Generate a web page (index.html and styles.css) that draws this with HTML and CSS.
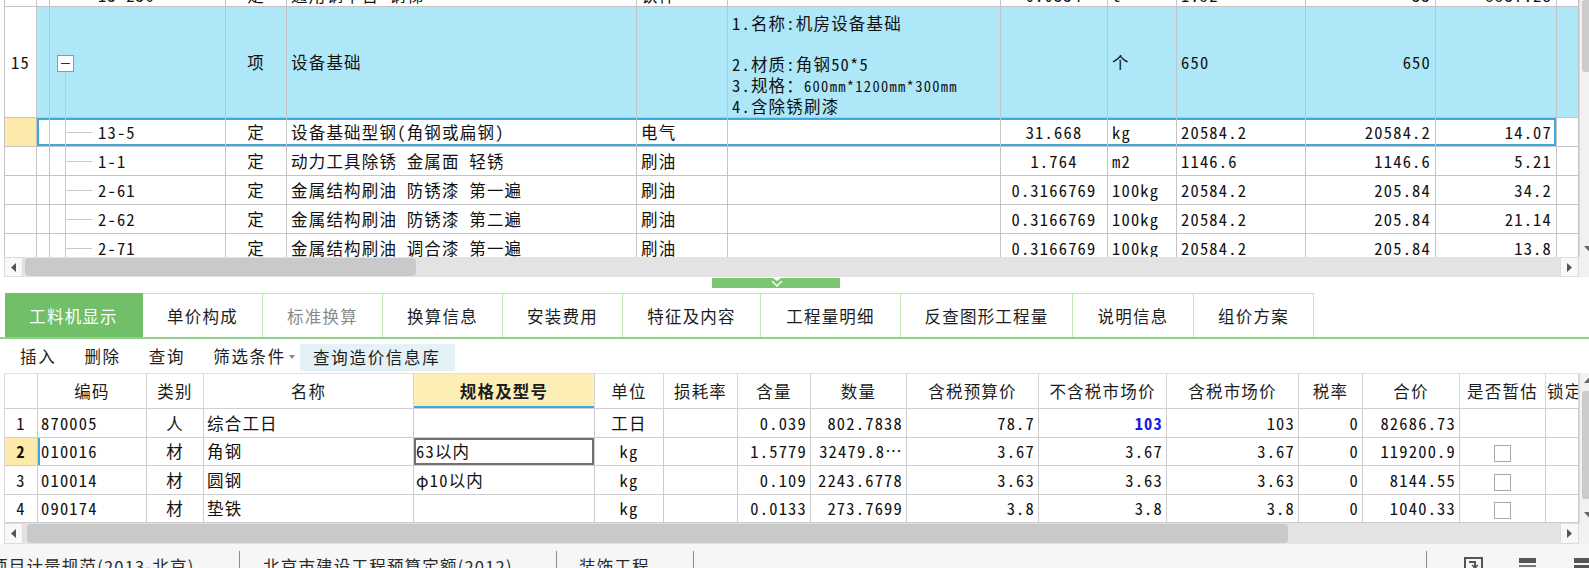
FILE: index.html
```html
<!DOCTYPE html>
<html lang="zh-CN">
<head>
<meta charset="utf-8">
<title>工料机显示</title>
<link rel="stylesheet" href="styles.css">
</head>
<body>
<div class="app">
  <section class="upper">
    <div class="upper-main">
      <div class="viewport">
        <table class="tg">
          <colgroup>
            <col class="tw-no"><col class="tw-flag"><col class="tw-code"><col class="tw-type"><col class="tw-name"><col class="tw-major"><col class="tw-feat"><col class="tw-qty"><col class="tw-unit"><col class="tw-expr"><col class="tw-amount"><col class="tw-price"><col class="tw-pad">
          </colgroup>
          <tbody>
            <tr class="r-partial">
              <td></td><td></td><td class="code-pad">13-236</td><td class="ctr">定</td><td>通用钢平台 钢梯</td><td>铁件</td><td></td><td class="ctr">0.0334</td><td>t</td><td>1.52</td><td class="num">33</td><td class="num">5537.28</td><td></td>
            </tr>
            <tr class="r-group">
              <td class="ctr">15</td>
              <td class="hl"></td>
              <td class="hl c-tree"><div class="node"><span class="minus"></span><span class="stem"></span></div></td>
              <td class="hl ctr">项</td>
              <td class="hl">设备基础</td>
              <td class="hl"></td>
              <td class="hl feat">
                <div>1.名称:机房设备基础</div>
                <div class="gap-line"></div>
                <div>2.材质:角钢50*5</div>
                <div>3.规格：<span class="small">600mm*1200mm*300mm</span></div>
                <div>4.含除锈刷漆</div>
              </td>
              <td class="hl"></td>
              <td class="hl">个</td>
              <td class="hl">650</td>
              <td class="hl num">650</td>
              <td class="hl"></td>
              <td class="hl"></td>
            </tr>
            <tr class="sel">
              <td class="mark"></td><td class="s s-first"></td>
              <td class="s c-tree"><div class="leaf"><i class="conn"></i>13-5</div></td>
              <td class="s ctr">定</td><td class="s">设备基础型钢(角钢或扁钢)</td><td class="s">电气</td><td class="s"></td>
              <td class="s ctr">31.668</td><td class="s">kg</td><td class="s">20584.2</td><td class="s num">20584.2</td><td class="s s-last num">14.07</td><td></td>
            </tr>
            <tr>
              <td></td><td></td>
              <td class="c-tree"><div class="leaf"><i class="conn"></i>1-1</div></td>
              <td class="ctr">定</td><td>动力工具除锈 金属面 轻锈</td><td>刷油</td><td></td>
              <td class="ctr">1.764</td><td>m2</td><td>1146.6</td><td class="num">1146.6</td><td class="num">5.21</td><td></td>
            </tr>
            <tr>
              <td></td><td></td>
              <td class="c-tree"><div class="leaf"><i class="conn"></i>2-61</div></td>
              <td class="ctr">定</td><td>金属结构刷油 防锈漆 第一遍</td><td>刷油</td><td></td>
              <td class="ctr">0.3166769</td><td>100kg</td><td>20584.2</td><td class="num">205.84</td><td class="num">34.2</td><td></td>
            </tr>
            <tr>
              <td></td><td></td>
              <td class="c-tree"><div class="leaf"><i class="conn"></i>2-62</div></td>
              <td class="ctr">定</td><td>金属结构刷油 防锈漆 第二遍</td><td>刷油</td><td></td>
              <td class="ctr">0.3166769</td><td>100kg</td><td>20584.2</td><td class="num">205.84</td><td class="num">21.14</td><td></td>
            </tr>
            <tr>
              <td></td><td></td>
              <td class="c-tree"><div class="leaf"><i class="conn"></i>2-71</div></td>
              <td class="ctr">定</td><td>金属结构刷油 调合漆 第一遍</td><td>刷油</td><td></td>
              <td class="ctr">0.3166769</td><td>100kg</td><td>20584.2</td><td class="num">205.84</td><td class="num">13.8</td><td></td>
            </tr>
          </tbody>
        </table>
      </div>
      <div class="hscroll">
        <span class="hs-btn"><svg width="6" height="9" viewBox="0 0 6 9"><polygon points="5,0 5,9 0,4.5" fill="#555"/></svg></span>
        <span class="hs-thumb top-thumb"></span>
        <span class="hs-fill"></span>
        <span class="hs-btn"><svg width="6" height="9" viewBox="0 0 6 9"><polygon points="0,0 0,9 5,4.5" fill="#555"/></svg></span>
      </div>
    </div>
    <div class="vcol">
      <div class="vscroll top-v">
        <span class="vs-thumb top-vthumb"></span>
        <span class="vs-fill"></span>
        <span class="vs-btn"><svg width="9" height="6" viewBox="0 0 9 6"><polygon points="0,0 9,0 4.5,5" fill="#666"/></svg></span>
      </div>
      <div class="corner"></div>
    </div>
  </section>

  <div class="splitter">
    <div class="handle">
      <svg width="14" height="9" viewBox="0 0 14 9"><polygon points="3,0 11,0 7,3" fill="#fff"/><polyline points="2,3 7,8 12,3" fill="none" stroke="#fff" stroke-width="1.4"/></svg>
    </div>
  </div>

  <nav class="tabs">
    <span class="tab active w138">工料机显示</span>
    <span class="tab w120">单价构成</span>
    <span class="tab w120 disabled">标准换算</span>
    <span class="tab w120">换算信息</span>
    <span class="tab w120">安装费用</span>
    <span class="tab w138">特征及内容</span>
    <span class="tab w140">工程量明细</span>
    <span class="tab w172">反查图形工程量</span>
    <span class="tab w121">说明信息</span>
    <span class="tab w120">组价方案</span>
  </nav>

  <div class="toolbar">
    <span class="tool">插入</span>
    <span class="tool">删除</span>
    <span class="tool">查询</span>
    <span class="tool drop">筛选条件<svg class="caret" width="6" height="4" viewBox="0 0 6 4"><polygon points="0,0 6,0 3,4" fill="#888"/></svg></span>
    <span class="tool boxed">查询造价信息库</span>
  </div>

  <section class="lower">
    <div class="lower-main">
      <table class="bgt">
        <colgroup>
          <col class="bw-no"><col class="bw-code"><col class="bw-type"><col class="bw-name"><col class="bw-spec"><col class="bw-unit"><col class="bw-loss"><col class="bw-cont"><col class="bw-qty"><col class="bw-p1"><col class="bw-p2"><col class="bw-p3"><col class="bw-rate"><col class="bw-total"><col class="bw-est"><col class="bw-lock">
        </colgroup>
        <thead>
          <tr>
            <th></th><th>编码</th><th>类别</th><th>名称</th><th class="active-h">规格及型号</th><th>单位</th><th>损耗率</th><th>含量</th><th>数量</th><th>含税预算价</th><th>不含税市场价</th><th>含税市场价</th><th>税率</th><th>合价</th><th>是否暂估</th><th class="cut">锁定</th>
          </tr>
        </thead>
        <tbody>
          <tr>
            <td class="ctr">1</td><td>870005</td><td class="ctr">人</td><td>综合工日</td><td class="spec"></td><td class="ctr">工日</td><td></td><td class="num">0.039</td><td class="num">802.7838</td><td class="num">78.7</td><td class="num blue">103</td><td class="num">103</td><td class="num">0</td><td class="num">82686.73</td><td></td><td></td>
          </tr>
          <tr class="cur">
            <td class="ctr mark bold">2</td><td class="cur-code">010016</td><td class="ctr">材</td><td>角钢</td><td class="spec edit">63以内</td><td class="ctr">kg</td><td></td><td class="num">1.5779</td><td class="num">32479.8…</td><td class="num">3.67</td><td class="num">3.67</td><td class="num">3.67</td><td class="num">0</td><td class="num">119200.9</td><td class="ctr"><span class="chk"></span></td><td></td>
          </tr>
          <tr>
            <td class="ctr">3</td><td>010014</td><td class="ctr">材</td><td>圆钢</td><td class="spec">φ10以内</td><td class="ctr">kg</td><td></td><td class="num">0.109</td><td class="num">2243.6778</td><td class="num">3.63</td><td class="num">3.63</td><td class="num">3.63</td><td class="num">0</td><td class="num">8144.55</td><td class="ctr"><span class="chk"></span></td><td></td>
          </tr>
          <tr>
            <td class="ctr">4</td><td>090174</td><td class="ctr">材</td><td>垫铁</td><td class="spec"></td><td class="ctr">kg</td><td></td><td class="num">0.0133</td><td class="num">273.7699</td><td class="num">3.8</td><td class="num">3.8</td><td class="num">3.8</td><td class="num">0</td><td class="num">1040.33</td><td class="ctr"><span class="chk"></span></td><td></td>
          </tr>
        </tbody>
      </table>
      <div class="hscroll low-h">
        <span class="hs-btn"><svg width="6" height="9" viewBox="0 0 6 9"><polygon points="5,0 5,9 0,4.5" fill="#555"/></svg></span>
        <span class="hs-thumb low-thumb"></span>
        <span class="hs-fill"></span>
        <span class="hs-btn"><svg width="6" height="9" viewBox="0 0 6 9"><polygon points="0,0 0,9 5,4.5" fill="#555"/></svg></span>
      </div>
    </div>
    <div class="vcol">
      <div class="vscroll low-v">
        <span class="vs-btn"><svg width="9" height="6" viewBox="0 0 9 6"><polygon points="0,5 9,5 4.5,0" fill="#666"/></svg></span>
        <span class="vs-thumb low-vthumb"></span>
        <span class="vs-fill"></span>
        <span class="vs-btn"><svg width="9" height="6" viewBox="0 0 9 6"><polygon points="0,0 9,0 4.5,5" fill="#666"/></svg></span>
      </div>
      <div class="corner low-corner"></div>
    </div>
  </section>

  <footer class="status">
    <span class="st-item st-1">项目计量规范(2013-北京)</span>
    <span class="st-sep"></span>
    <span class="st-item st-2">北京市建设工程预算定额(2012)</span>
    <span class="st-sep"></span>
    <span class="st-item st-3">装饰工程</span>
    <span class="st-sep"></span>
    <span class="st-fill"></span>
    <span class="st-sep"></span>
    <span class="st-icons">
      <svg class="ico ico-1" width="20" height="20" viewBox="0 0 20 20"><rect x="1" y="2" width="17" height="17" fill="none" stroke="#555" stroke-width="2"/><path d="M5 6h6v5" fill="none" stroke="#555" stroke-width="2"/><path d="M8 9l3 3 3-3" fill="none" stroke="#555" stroke-width="1.5"/></svg>
      <svg class="ico ico-2" width="20" height="20" viewBox="0 0 20 20"><rect x="1" y="2" width="17" height="5" fill="#555"/><rect x="1" y="9" width="17" height="2" fill="#777"/><rect x="1" y="13" width="17" height="5" fill="none" stroke="#555" stroke-width="1.5"/></svg>
      <svg class="ico ico-3" width="20" height="20" viewBox="0 0 20 20"><rect x="1" y="2" width="17" height="5" fill="#555"/><rect x="1" y="9" width="17" height="5" fill="#555"/><rect x="1" y="16" width="17" height="2" fill="#777"/></svg>
    </span>
  </footer>
</div>
</body>
</html>
```

FILE: styles.css
```css
* { box-sizing: border-box; }
html, body { margin: 0; padding: 0; }
body {
  width: 1589px;
  height: 568px;
  overflow: hidden;
  background: #fff;
  color: #151515;
  font-family: "Noto Sans CJK SC", "Noto Sans", sans-serif;
}
.app {
  --mono: "Noto Sans Mono CJK SC", "Liberation Mono", "Noto Sans CJK SC", monospace;
  --ui: "Noto Sans CJK SC", "Noto Sans", sans-serif;
  --line: #c4c4c4;
  display: flex;
  flex-direction: column;
  width: 1600px;
  height: 568px;
}

/* ---------- upper grid ---------- */
.upper { display: flex; height: 277px; flex: none; }
.upper-main { width: 1579px; padding-left: 4px; display: flex; flex-direction: column; flex: none; }
.viewport { height: 257px; overflow: hidden; flex: none; }

.tg, .bgt {
  table-layout: fixed;
  border-collapse: separate;
  border-spacing: 0;
  width: 1575px;
  font-family: var(--mono);
  font-size: 16.5px;
  letter-spacing: 1.2px;
  color: #111;
}
.tg { margin-top: -17px; }
.tg td {
  border-right: 1px solid var(--line);
  border-bottom: 1px solid var(--line);
  padding: 0 3px 0 4px;
  white-space: nowrap;
  overflow: hidden;
  line-height: 20px;
}
.tg td:first-child { border-left: 1px solid var(--line); }
.tg tr { height: 29px; }
.tg tr.r-partial { height: 24px; }
.tg tr.r-group { height: 111px; }

.tw-no { width: 33px; } .tw-flag { width: 13px; } .tw-code { width: 176px; }
.tw-type { width: 61px; } .tw-name { width: 350px; } .tw-major { width: 91px; }
.tw-feat { width: 273px; } .tw-qty { width: 107px; } .tw-unit { width: 69px; }
.tw-expr { width: 129px; } .tw-amount { width: 130px; } .tw-price { width: 121px; }
.tw-pad { width: 22px; }

.ctr { text-align: center; }
.num { text-align: right; }
.tg td.num { padding-right: 4px; }
.tg td.ctr { padding: 0; }
.code-pad { padding-left: 48px !important; }

.hl { background: #aee7f8; }
.tg td.feat { padding-top: 6px; line-height: 20.5px; }
.gap-line { height: 20.5px; }
.small { font-size: 14.5px; letter-spacing: 1.3px; }

.tg td.c-tree { padding: 0; vertical-align: top; }
.node {
  height: 110px;
  display: flex;
  flex-direction: column;
  padding: 48px 0 0 7px;
}
.minus {
  width: 17px;
  height: 17px;
  border: 1px solid #979797;
  background: #fff;
  display: flex;
  align-items: center;
  justify-content: center;
  flex: none;
}
.minus::before { content: ""; width: 9px; height: 1px; background: #333; }
.stem { flex: 1; margin-left: 8px; border-left: 1px solid #c9c9c9; }
.leaf {
  height: 28px;
  margin-left: 15px;
  border-left: 1px solid #c9c9c9;
  display: flex;
  align-items: center;
}
.conn { width: 26px; height: 0; border-top: 1px solid #c9c9c9; margin-right: 6px; flex: none; }

.tg td.mark, .bgt td.mark { background: #fde9a9; }
.sel td.s { box-shadow: inset 0 2px 0 #3ea8da, inset 0 -2px 0 #3ea8da; }
.sel td.s-first { box-shadow: inset 2px 0 0 #3ea8da, inset 0 2px 0 #3ea8da, inset 0 -2px 0 #3ea8da; }
.sel td.s-last { box-shadow: inset -2px 0 0 #3ea8da, inset 0 2px 0 #3ea8da, inset 0 -2px 0 #3ea8da; }

/* ---------- scrollbars ---------- */
.hscroll { height: 20px; display: flex; background: #e3e3e3; flex: none; }
.hs-btn {
  width: 19px;
  flex: none;
  background: #f8f8f8;
  border: 1px solid #dcdcdc;
  display: flex;
  align-items: center;
  justify-content: center;
}
.hs-thumb { flex: none; margin: 1px 0 1px 2px; background: #c9c9c9; border-radius: 4px; }
.top-thumb { width: 391px; }
.low-thumb { width: 1261px; margin-left: 4px; }
.hs-fill { flex: 1; }
.low-h { height: 21px; }

.vcol { width: 17px; flex: none; display: flex; flex-direction: column; }
.vscroll { display: flex; flex-direction: column; background: #f1f1f1; border-left: 1px solid #dadada; }
.top-v { height: 257px; }
.low-v { height: 150px; }
.vs-btn { height: 16px; flex: none; display: flex; align-items: center; justify-content: center; }
.vs-thumb { flex: none; margin: 0 2px; background: #cbcbcb; border-radius: 3px; }
.top-vthumb { height: 72px; }
.low-vthumb { height: 108px; margin-top: 2px; }
.vs-fill { flex: 1; }
.corner { height: 20px; background: #f1f1f1; }
.low-corner { height: 21px; }

/* ---------- splitter ---------- */
.splitter { height: 16px; flex: none; padding: 1px 0 0 712px; }
.handle {
  width: 128px;
  height: 10px;
  background: #7bc471;
  display: flex;
  justify-content: center;
  padding-left: 2px;
}

/* ---------- tabs ---------- */
.tabs {
  height: 46px;
  flex: none;
  display: flex;
  padding-left: 5px;
  border-bottom: 2px solid #8fd385;
  font-family: var(--ui);
  font-size: 16.5px;
  letter-spacing: 1.2px;
  color: #1d1d1d;
}
.tab {
  display: flex;
  align-items: center;
  justify-content: center;
  border-top: 1px solid #bfe9b3;
  border-right: 1px solid #bfe9b3;
  flex: none;
}
.tab.active { background: #71c069; color: #fff; border-color: #71c069; }
.tab.disabled { color: #8a8a8a; }
.w120 { width: 120px; } .w121 { width: 121px; } .w138 { width: 138px; }
.w140 { width: 140px; } .w172 { width: 172px; }

/* ---------- toolbar ---------- */
.toolbar {
  height: 34px;
  flex: none;
  display: flex;
  align-items: center;
  padding-left: 20px;
  font-family: var(--ui);
  font-size: 16.5px;
  letter-spacing: 1.7px;
  color: #1d1d1d;
}
.tool { margin-right: 28px; flex: none; }
.tool.drop { margin-right: 5px; display: flex; align-items: center; }
.caret { margin-left: 3px; margin-top: 2px; flex: none; }
.tool.boxed {
  background: #e4f2f7;
  height: 27px;
  margin-top: 2px;
  width: 155px;
  padding-left: 13px;
  display: flex;
  align-items: center;
}

/* ---------- lower grid ---------- */
.lower { display: flex; height: 171px; flex: none; }
.lower-main { width: 1579px; padding-left: 4px; display: flex; flex-direction: column; flex: none; }
.bgt { flex: none; }
.bgt th {
  height: 36px;
  font-family: var(--ui);
  font-weight: 400;
  font-size: 16.5px;
  color: #1d1d1d;
  border-top: 1px solid #e1e1e1;
  border-right: 1px solid #d5d5d5;
  border-bottom: 1px solid #cfcfcf;
  padding: 0;
  white-space: nowrap;
  overflow: hidden;
  text-align: center;
}
.bgt th:first-child, .bgt td:first-child { border-left: 1px solid #d5d5d5; }
.bgt th.active-h { background: #fdeeb6; font-weight: 700; box-shadow: inset 0 -2px 0 #3ea8da; }
.bgt th.cut { text-align: left; padding-left: 1px; }
.bgt tbody tr { height: 28.5px; }
.bgt td {
  border-right: 1px solid #cdcdcd;
  border-bottom: 1px solid #cdcdcd;
  padding: 0 3px;
  white-space: nowrap;
  overflow: hidden;
}
.bgt td.num { padding-right: 3px; }
.bgt td.ctr { padding: 0; }
.bgt td.spec { padding-left: 2px; }
.bgt td.edit { box-shadow: inset 0 0 0 2px #717171; }
.bgt td.cur-code { box-shadow: inset 2px 0 0 #3ea8da; }
.bold { font-weight: 700; }
.blue { color: #1b1be8; font-weight: 700; }
.chk {
  display: inline-block;
  width: 17px;
  height: 17px;
  border: 1px solid #a9a9a9;
  background: #fff;
  vertical-align: middle;
}
.bw-no { width: 34px; } .bw-code { width: 109px; } .bw-type { width: 57px; }
.bw-name { width: 210px; } .bw-spec { width: 181px; } .bw-unit { width: 69px; }
.bw-loss { width: 74px; } .bw-cont { width: 73px; } .bw-qty { width: 96px; }
.bw-p1 { width: 132px; } .bw-p2 { width: 128px; } .bw-p3 { width: 132px; }
.bw-rate { width: 64px; } .bw-total { width: 97px; } .bw-est { width: 86px; }
.bw-lock { width: 33px; }

/* ---------- status bar ---------- */
.status {
  height: 24px;
  flex: none;
  display: flex;
  align-items: flex-start;
  background: #f6f6f6;
  overflow: hidden;
  font-family: var(--ui);
  font-size: 16.5px;
  letter-spacing: 1.2px;
  color: #2a2a2a;
}
.st-item { flex: none; padding-top: 11px; line-height: 22px; white-space: nowrap; overflow: hidden; }
.st-1 { width: 248px; margin-left: -9px; }
.st-2 { width: 316px; padding-left: 23px; }
.st-3 { width: 136px; padding-left: 22px; }
.st-sep { width: 1px; height: 17px; margin-top: 7px; background: #8c8c8c; flex: none; }
.st-fill { width: 732px; flex: none; }
.st-icons { display: flex; flex: none; padding: 12px 0 0 37px; }
.ico { flex: none; }
.ico-2 { margin-left: 34px; }
.ico-3 { margin-left: 35px; }
```
